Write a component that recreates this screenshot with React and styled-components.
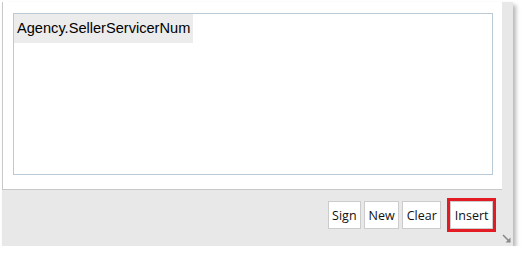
import styled, { createGlobalStyle } from 'styled-components';

const GlobalStyle = createGlobalStyle`
  body {
    margin: 0;
    background: #ffffff;
  }
`;

const Dialog = styled.div`
  position: relative;
  margin: 2px 0 0 2px;
  width: 511px;
  height: 244px;
  background-color: #e8e8e8;
  box-shadow: 3px 3px 4px rgba(0, 0, 0, 0.28);
  display: flex;
  flex-direction: column;
  box-sizing: border-box;
`;

const Panel = styled.div`
  width: 500px;
  height: 188px;
  box-sizing: border-box;
  background-color: #ffffff;
  border-left: 1px solid #c8c8c8;
  border-bottom: 1px solid #c8c8c8;
  padding: 11px 9px 0 10px;
`;

const Editor = styled.div`
  height: 162px;
  box-sizing: border-box;
  border: 1px solid #b9cad6;
  display: flex;
  align-items: flex-start;
`;

const Token = styled.span`
  background-color: #ececec;
  color: #000;
  font-family: 'Liberation Sans', Arial, sans-serif;
  font-size: 14.6px;
  line-height: 29px;
  padding: 0 3px 0 3px;
`;

const Footer = styled.div`
  flex: 1;
  display: flex;
  justify-content: flex-end;
  align-items: flex-start;
  gap: 3px;
  padding: 11px 20px 0 0;
`;

const Button = styled.button`
  height: 28px;
  padding: 0 3.5px;
  background-color: #ffffff;
  border: 1px solid #cccccc;
  border-radius: 0;
  font-family: 'Open Sans', sans-serif;
  font-size: 12.5px;
  color: #111;
  cursor: pointer;
  margin-left: ${({ $highlighted }) => ($highlighted ? '6px' : '0')};
  outline: ${({ $highlighted }) => ($highlighted ? '3px solid #e31b23' : 'none')};
`;

const Grip = styled.svg`
  position: absolute;
  right: 1px;
  bottom: 2px;
`;

export default function App() {
  return (
    <>
      <GlobalStyle />
      <Dialog>
        <Panel>
          <Editor>
            <Token>Agency.SellerServicerNum</Token>
          </Editor>
        </Panel>
        <Footer>
          <Button>Sign</Button>
          <Button>New</Button>
          <Button>Clear</Button>
          <Button $highlighted>Insert</Button>
        </Footer>
        <Grip width="10" height="10" viewBox="0 0 10 10">
          <path d="M1 1 L8 8" stroke="#8a8a8a" strokeWidth="1.6" />
          <path d="M3.5 8.5 H8.5 V3.5 Z" fill="#8a8a8a" />
        </Grip>
      </Dialog>
    </>
  );
}
